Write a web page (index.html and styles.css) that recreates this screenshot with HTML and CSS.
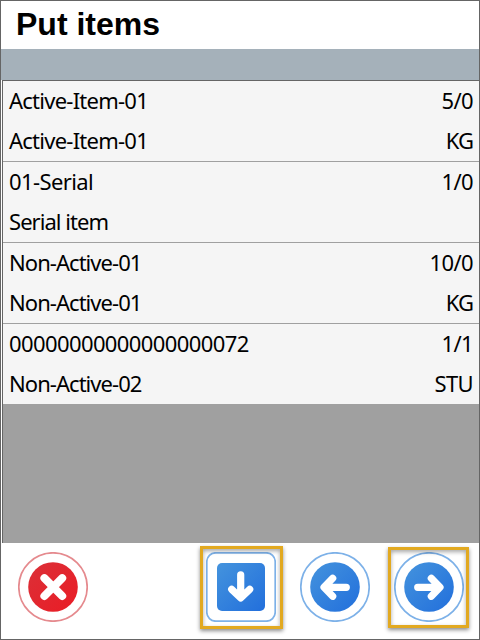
FILE: index.html
```
<!DOCTYPE html>
<html lang="en">
<head>
<meta charset="utf-8">
<title>Put items</title>
<link rel="stylesheet" href="styles.css">
</head>
<body>
<main class="screen">
  <h1 class="title">Put items</h1>
  <div class="band"></div>
  <section class="list">
    <div class="item">
      <div class="line"><span class="snug">Active-Item-01</span><span>5/0</span></div>
      <div class="line"><span class="snug">Active-Item-01</span><span class="tight">KG</span></div>
    </div>
    <div class="item">
      <div class="line"><span>01-Serial</span><span>1/0</span></div>
      <div class="line"><span class="tight">Serial item</span></div>
    </div>
    <div class="item">
      <div class="line"><span class="tight">Non-Active-01</span><span>10/0</span></div>
      <div class="line"><span class="tight">Non-Active-01</span><span class="tight">KG</span></div>
    </div>
    <div class="item">
      <div class="line"><span>00000000000000000072</span><span>1/1</span></div>
      <div class="line"><span class="tight">Non-Active-02</span><span>STU</span></div>
    </div>
  </section>
  <footer class="actions">
    <button class="action" aria-label="Cancel">
      <svg viewBox="0 0 70 70">
        <defs><linearGradient id="red" x1="0" y1="0" x2="1" y2="1"><stop offset="0" stop-color="#db3038"/><stop offset="1" stop-color="#ea1c25"/></linearGradient></defs>
        <circle cx="35" cy="35" r="34.2" fill="#fff" stroke="#e58a8e" stroke-width="1.7"/>
        <circle cx="35" cy="35" r="24.8" fill="url(#red)"/>
        <path d="M26.4 26.2L44.2 44M44.2 26.2L26.4 44" class="cross"/>
      </svg>
    </button>
    <button class="action" aria-label="Down">
      <svg viewBox="0 0 70 70">
        <defs><linearGradient id="blue" x1="0" y1="0" x2="1" y2="1"><stop offset="0" stop-color="#4493dd"/><stop offset="1" stop-color="#226fdc"/></linearGradient></defs>
        <rect x=".8" y=".8" width="68.4" height="68.4" rx="9" fill="#fff" stroke="#7db1e8" stroke-width="1.7"/>
        <rect x="11" y="11" width="48" height="48" rx="5" fill="url(#blue)"/>
        <path d="M34.7 22.8V45M25.7 37.3L34.7 46L43.7 37.3" class="arrow"/>
      </svg>
      <span class="mark"></span>
    </button>
    <button class="action" aria-label="Back">
      <svg viewBox="0 0 70 70">
        <circle cx="35" cy="35" r="34.2" fill="#fff" stroke="#7db1e8" stroke-width="1.7"/>
        <circle cx="35" cy="35" r="24.8" fill="url(#blue)"/>
        <path d="M46.3 35.3H25M32.7 26.3L24 35.3L32.7 44.3" class="arrow"/>
      </svg>
    </button>
    <button class="action" aria-label="Next">
      <svg viewBox="0 0 70 70">
        <circle cx="35" cy="35" r="34.2" fill="#fff" stroke="#7db1e8" stroke-width="1.7"/>
        <circle cx="35" cy="35" r="24.8" fill="url(#blue)"/>
        <path d="M23.7 35.3H45M37.3 26.3L46 35.3L37.3 44.3" class="arrow"/>
      </svg>
      <span class="mark mark-next"></span>
    </button>
  </footer>
</main>
</body>
</html>
```
FILE: styles.css
```
* { box-sizing: border-box; }
body { margin: 0; background: #fff; }
.screen {
  width: 480px;
  height: 640px;
  display: flex;
  flex-direction: column;
  border: 1px solid #656565;
  background: #fff;
  color: #000;
  overflow: hidden;
}
.title {
  flex: 0 0 48px;
  margin: 0;
  padding-left: 15px;
  font: bold 32px/46px "Liberation Sans", Arial, sans-serif;
}
.band { flex: 0 0 31px; background: #a5b1ba; }
.list {
  flex: 1;
  margin-left: 1px;
  border-top: 1px solid #656565;
  border-left: 1px solid #656565;
  background: #a0a0a0;
}
.item {
  height: 81px;
  background: #f5f5f5;
  border-bottom: 1px solid #a0a0a0;
}
.item:last-child { height: 80px; border-bottom: 0; }
.line {
  height: 40px;
  padding: 0 6px 0 6px;
  display: flex;
  justify-content: space-between;
  font: 22px/39px "Noto Sans", Tahoma, sans-serif;
  letter-spacing: -0.6px;
  white-space: nowrap;
}
.snug { letter-spacing: -0.75px; }
.tight { letter-spacing: -0.95px; }
.actions {
  flex: 0 0 96px;
  padding: 9px 0 0 17px;
  display: grid;
  grid-template-columns: 188px 94px 94px 70px;
  align-items: start;
  background: #fff;
}
.action {
  position: relative;
  width: 70px;
  height: 70px;
  padding: 0;
  border: 0;
  background: none;
}
.action svg { display: block; width: 70px; height: 70px; }
.cross { fill: none; stroke: #fff; stroke-width: 8; stroke-linecap: round; }
.arrow { fill: none; stroke: #fff; stroke-width: 7.2; stroke-linecap: round; stroke-linejoin: round; }
.mark {
  position: absolute;
  inset: -6px -7px -7px -6px;
  border: 3px solid #e2a920;
  box-shadow: 0 2px 4px rgba(0, 0, 0, .45), inset 0 2px 4px rgba(0, 0, 0, .35);
}
.mark-next { inset: -5px -5px -6px -6px; }
```
